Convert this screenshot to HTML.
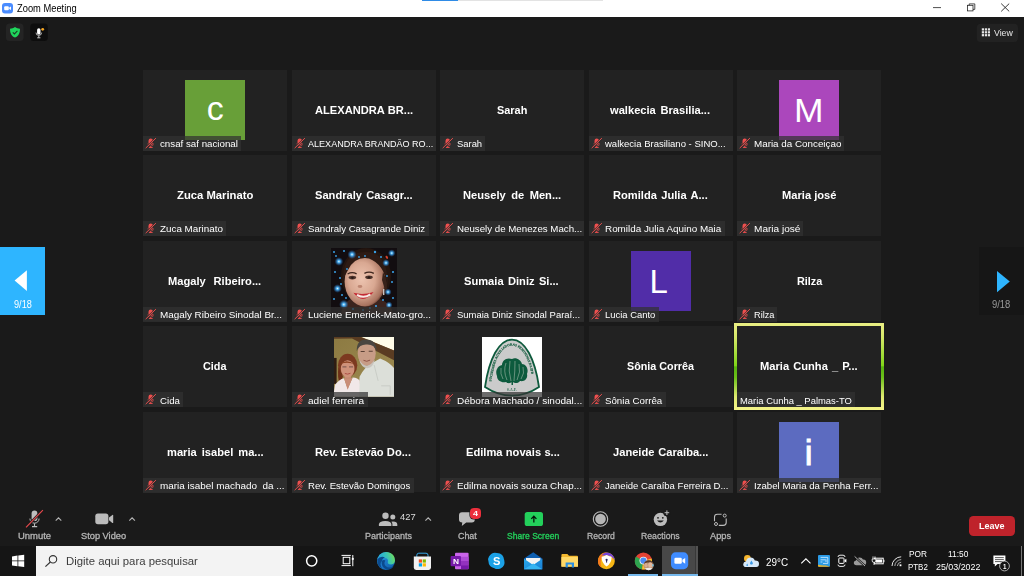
<!DOCTYPE html>
<html><head><meta charset="utf-8"><title>Zoom Meeting</title><style>
html,body{margin:0;padding:0;background:#1a1a1a;}
body{width:1024px;height:576px;position:relative;overflow:hidden;font-family:"Liberation Sans", sans-serif;}
.t{position:absolute;white-space:pre;line-height:normal;transform-origin:0 0;}
.tile{position:absolute;width:144px;height:80.6px;background:#222222;}
.av{position:absolute;width:60px;height:60px;}
.strip{position:absolute;height:14.8px;background:rgba(50,50,50,0.72);}
.mic{position:absolute;left:1.2px;top:0px;}
.abs{position:absolute;}
</style></head>
<body>
<!-- title bar -->
<div class="abs" style="left:0;top:0;width:1024px;height:17px;background:#ffffff"></div>
<div class="abs" style="left:422px;top:0;width:180.5px;height:1.2px;background:#e3e3e3"></div>
<div class="abs" style="left:422px;top:0;width:36px;height:1.2px;background:#2f8be6"></div>
<svg class="abs" style="left:0;top:0" width="1024" height="60" viewBox="0 0 1024 60">
  <!-- zoom logo -->
  <rect x="2" y="3" width="11" height="10.5" rx="3" fill="#4a8cff"/>
  <rect x="4.2" y="6.3" width="4.6" height="3.9" rx="1" fill="#fff"/>
  <path d="M9.2 7.6 L11 6.5 V10 L9.2 8.9 Z" fill="#fff"/>
  <!-- window controls -->
  <path d="M933 7.6 H941" stroke="#222" stroke-width="0.8"/>
  <rect x="967.4" y="5.3" width="5.6" height="5.6" fill="none" stroke="#222" stroke-width="0.8"/>
  <path d="M969.2 5.3 V3.9 H974.8 V9.4 H973" fill="none" stroke="#222" stroke-width="0.8"/>
  <path d="M1001.2 3.6 L1009.2 11.4 M1009.2 3.6 L1001.2 11.4" stroke="#222" stroke-width="0.9"/>
  <!-- shield -->
  <rect x="6" y="23.5" width="17.5" height="17.5" rx="3.5" fill="#242424"/>
  <path d="M15 27 C13.4 28.2 11.8 28.6 10 28.7 C10 33 11.3 35.9 15 37.6 C18.7 35.9 20 33 20 28.7 C18.2 28.6 16.6 28.2 15 27 Z" fill="#1fd65c"/>
  <path d="M12.8 32.3 L14.4 33.9 L17.4 30.8" fill="none" stroke="#1c3b25" stroke-width="1.1"/>
  <!-- mic box -->
  <rect x="30.2" y="23.5" width="17.6" height="17.5" rx="3.5" fill="#0d0d0d"/>
  <rect x="37.1" y="28.2" width="3.4" height="6.4" rx="1.7" fill="#fff"/>
  <path d="M36 32.6 a2.8 2.8 0 0 0 5.6 0" fill="none" stroke="#ddd" stroke-width="0.8"/>
  <path d="M38.8 35.6 V37.6 M37.2 37.8 H40.4" stroke="#ddd" stroke-width="0.9"/>
  <circle cx="42.7" cy="29.3" r="1.4" fill="#f5a623"/>
  <!-- view -->
  <rect x="976.8" y="23.8" width="41.2" height="18.2" rx="4" fill="#222222"/>
  <g fill="#e6e6e6">
    <rect x="981.8" y="28.3" width="2.2" height="2.2"/><rect x="984.8" y="28.3" width="2.2" height="2.2"/><rect x="987.8" y="28.3" width="2.2" height="2.2"/>
    <rect x="981.8" y="31.2" width="2.2" height="2.2"/><rect x="984.8" y="31.2" width="2.2" height="2.2"/><rect x="987.8" y="31.2" width="2.2" height="2.2"/>
    <rect x="981.8" y="34.1" width="2.2" height="2.2"/><rect x="984.8" y="34.1" width="2.2" height="2.2"/><rect x="987.8" y="34.1" width="2.2" height="2.2"/>
  </g>
</svg>
<!-- page arrows -->
<div class="abs" style="left:0;top:247px;width:45px;height:68px;background:#2eb5ff"></div>
<div class="abs" style="left:978.8px;top:247px;width:45.2px;height:68px;background:#161616"></div>
<svg class="abs" style="left:0;top:240px" width="1024" height="80" viewBox="0 240 1024 80">
  <path d="M26.9 270.3 V291 L14.6 280.6 Z" fill="#fff"/>
  <path d="M997 271 V292.3 L1009.8 281.6 Z" fill="#2eb5ff"/>
</svg>

<div class="tile" style="left:143px;top:70px"></div>
<div class="tile" style="left:291.7px;top:70px"></div>
<div class="tile" style="left:440px;top:70px"></div>
<div class="tile" style="left:588.6px;top:70px"></div>
<div class="tile" style="left:737px;top:70px"></div>
<div class="tile" style="left:143px;top:155.2px"></div>
<div class="tile" style="left:291.7px;top:155.2px"></div>
<div class="tile" style="left:440px;top:155.2px"></div>
<div class="tile" style="left:588.6px;top:155.2px"></div>
<div class="tile" style="left:737px;top:155.2px"></div>
<div class="tile" style="left:143px;top:240.8px"></div>
<div class="tile" style="left:291.7px;top:240.8px"></div>
<div class="tile" style="left:440px;top:240.8px"></div>
<div class="tile" style="left:588.6px;top:240.8px"></div>
<div class="tile" style="left:737px;top:240.8px"></div>
<div class="tile" style="left:143px;top:326.4px"></div>
<div class="tile" style="left:291.7px;top:326.4px"></div>
<div class="tile" style="left:440px;top:326.4px"></div>
<div class="tile" style="left:588.6px;top:326.4px"></div>
<div class="tile" style="left:737px;top:326.4px"></div>
<div class="tile" style="left:143px;top:411.9px"></div>
<div class="tile" style="left:291.7px;top:411.9px"></div>
<div class="tile" style="left:440px;top:411.9px"></div>
<div class="tile" style="left:588.6px;top:411.9px"></div>
<div class="tile" style="left:737px;top:411.9px"></div>
<div class="av" style="left:185.0px;top:80.2px;background:#689f38"></div>
<div class="av" style="left:779.0px;top:80.2px;background:#ab47bc"></div>
<div class="av" style="left:630.6px;top:251.0px;background:#512da8"></div>
<div class="av" style="left:779.0px;top:422.1px;background:#5c6bc0"></div><!-- photo 1 -->
<svg class="abs" style="left:331px;top:248px" width="66" height="66" viewBox="0 0 66 66">
  <defs><filter id="b1" x="-10%" y="-10%" width="120%" height="120%"><feGaussianBlur stdDeviation="0.8"/></filter>
  <filter id="b0" x="-50%" y="-50%" width="200%" height="200%"><feGaussianBlur stdDeviation="0.55"/></filter>
  <radialGradient id="skin" cx="0.42" cy="0.45" r="0.6"><stop offset="0" stop-color="#edc4b0"/><stop offset="0.55" stop-color="#d9a892"/><stop offset="0.9" stop-color="#a8735f"/><stop offset="1" stop-color="#6e4436"/></radialGradient>
  <radialGradient id="spk"><stop offset="0" stop-color="#e4f6ff"/><stop offset="0.3" stop-color="#49aef0"/><stop offset="1" stop-color="#1b5fb0" stop-opacity="0"/></radialGradient><clipPath id="c1"><rect width="66" height="66"/></clipPath></defs>
  <rect width="66" height="66" fill="#120d10"/>
  <g clip-path="url(#c1)"><g>
    <ellipse cx="35" cy="28" rx="25" ry="28" fill="#24150f"/>
    <path d="M10 66 Q12 52 24 50 L46 50 Q60 54 62 66Z" fill="#3c241e"/>
    <ellipse cx="34" cy="33.4" rx="20.4" ry="25" fill="url(#skin)"/>
    <path d="M12 32 Q12 3 36 4 Q57 5 57 38 Q53 16 38 10.5 Q24 8 17 22 Q13.6 28 12 32Z" fill="#2e1b14"/>
    <path d="M52 24 Q58 34 55 46 Q53 38 51 32Z" fill="#38221a"/>
    <ellipse cx="21.4" cy="29.6" rx="3.8" ry="1.8" fill="#4e342c"/><ellipse cx="21.4" cy="29.8" rx="1.3" ry="1.1" fill="#2a1a16"/>
    <ellipse cx="38" cy="29.2" rx="3.8" ry="1.8" fill="#4e342c"/><ellipse cx="38" cy="29.4" rx="1.3" ry="1.1" fill="#2a1a16"/>
    <path d="M16.6 26 Q21 23.4 25.6 25.8" stroke="#3e261e" stroke-width="1.3" fill="none"/>
    <path d="M33.4 25.4 Q38 22.8 42.8 25.4" stroke="#3e261e" stroke-width="1.3" fill="none"/>
    <path d="M22.4 44.8 Q32 57.4 42.6 44 Q32 47.4 22.4 44.8Z" fill="#c42a34"/>
    <path d="M26 46.8 Q32.6 51 39.4 46.4" stroke="#f6e9e4" stroke-width="2" fill="none"/>
    <ellipse cx="29" cy="38.5" rx="2.4" ry="1.4" fill="#bd8672"/>
    <rect x="52" y="41" width="1.4" height="6" fill="#c9c2c0"/>
  </g>
  <g fill="#3aa0e6">
    
    
    <circle cx="3" cy="4" r="1"/><circle cx="13" cy="3" r="1"/><circle cx="44" cy="4" r="1.2"/><circle cx="50" cy="9" r="1"/><circle cx="62" cy="24" r="1.1"/><circle cx="61" cy="34" r="1"/>
    <circle cx="4" cy="24" r="1"/><circle cx="9" cy="30" r="1"/><circle cx="3" cy="51" r="1"/><circle cx="22" cy="61" r="1.1"/><circle cx="45" cy="58" r="1.1"/><circle cx="52" cy="52" r="1"/>
    <circle cx="11" cy="47" r="1"/><circle cx="62" cy="50" r="1"/><circle cx="28" cy="9" r="0.9"/><circle cx="34" cy="8" r="0.9"/><circle cx="16" cy="21" r="0.9"/>
    <circle cx="10" cy="36" r="0.9"/><circle cx="15" cy="50" r="0.9"/><circle cx="39" cy="60" r="0.9"/><circle cx="32" cy="62" r="0.9"/><circle cx="56" cy="28" r="0.9"/><circle cx="5" cy="8" r="0.9"/>
  </g>
  <g fill="url(#spk)"><circle cx="7.9" cy="13.5" r="4.4"/><circle cx="21" cy="6.5" r="4.6"/><circle cx="6.5" cy="40.5" r="4.4"/><circle cx="12.8" cy="56.5" r="4.8"/><circle cx="60.7" cy="5.1" r="3.8"/><circle cx="55" cy="14.9" r="3.8"/><circle cx="57" cy="44" r="3.6"/><circle cx="58" cy="57" r="3.6"/></g>
  <ellipse cx="55.8" cy="9.3" rx="1.1" ry="1.7" fill="#d6402a" transform="rotate(-30 55.8 9.3)"/>
  </g>
</svg>
<!-- photo 2 -->
<svg class="abs" style="left:333.6px;top:337px" width="60.2" height="59.8" viewBox="0 0 60 60" preserveAspectRatio="none">
  <defs><filter id="b2" x="-10%" y="-10%" width="120%" height="120%"><feGaussianBlur stdDeviation="0.82"/></filter><clipPath id="c2"><rect width="60" height="60"/></clipPath>
  <linearGradient id="wall" x1="0" y1="0" x2="1" y2="1"><stop offset="0" stop-color="#8c7a42"/><stop offset="1" stop-color="#9f8c52"/></linearGradient></defs>
  <rect width="60" height="60" fill="url(#wall)"/>
  <g clip-path="url(#c2)"><g>
    <path d="M0 0 H60 V21 L20 0Z" fill="#7a5a2c"/>
    <path d="M25 -1 H61 V14 Z" fill="#fffce8"/>
    <path d="M-1 -0.5 L25 -0.5 L61 14 V24 L18 1.6 L-1 1.8Z" fill="#5a3c22"/>
    <rect x="-1" y="21" width="3.6" height="26" fill="#2e1c12"/>
    <!-- man shirt -->
    <path d="M24 61 L25.5 40 Q30 30 38 26 L46 21.5 Q57 26 61 33 V61Z" fill="#dcdfd9"/>
    <path d="M40 28 L44 44 M47 49 H56 V58" stroke="#c4c8c2" stroke-width="0.8" fill="none"/>
    <!-- man head -->
    <ellipse cx="32.6" cy="16.5" rx="9" ry="12.4" fill="#c79c86"/>
    <path d="M22.6 14 Q22.6 2.2 32 2.4 Q42.6 2.4 42.6 15 Q40.6 7.2 32.6 7.6 Q25.6 7.2 22.6 14Z" fill="#4a4641"/>
    <path d="M25 22.6 Q32.6 35 40.6 22.6 Q39.4 30.6 33 31.4 Q27 30.6 25 22.6Z" fill="#c9c4be"/>
    <path d="M26.6 14.6 H30.6 M34.6 14.2 H38.6" stroke="#5a4034" stroke-width="1"/>
    <path d="M29.4 23.4 Q32.6 25.4 36 23.2" stroke="#8a4c40" stroke-width="0.9" fill="none"/>
    <!-- woman -->
    <ellipse cx="13.6" cy="28.4" rx="9.6" ry="11.6" fill="#7c3a20"/>
    <path d="M4.4 30 Q3 42 6 46 L9 40Z" fill="#6e3018"/>
    <rect x="10.6" y="36" width="6.4" height="8" fill="#c58a72"/><ellipse cx="13.6" cy="32" rx="6.8" ry="8.6" fill="#cf927a"/>
    <path d="M6.6 27 Q12 21.4 20.6 27.4 Q14 24.6 6.6 27Z" fill="#8c4220"/>
    <path d="M8.4 30 H12.4 M15 30 H19" stroke="#6a4a44" stroke-width="0.9"/>
    <path d="M10.8 36.6 Q13.6 38 16.4 36.4" stroke="#a84840" stroke-width="0.9" fill="none"/>
    <path d="M-1 61 L1 48 Q5 42.6 10 41.4 L13.6 52 L18.6 40.6 Q24 41 25.6 44 L25 61Z" fill="#f1e8e8"/>
    <path d="M10 41.4 L13.6 53 L18.6 40.6 Q14 43.6 10 41.4Z" fill="#c98e78"/>
  </g></g>
</svg>
<!-- photo 3 logo -->
<svg class="abs" style="left:482px;top:337px" width="60" height="60" viewBox="0 0 60 60">
  <defs><path id="arc" d="M9.2 45.5 C12 22 20 8.6 30 8.6 C40 8.6 48 22 50.8 45.5"/><filter id="b3"><feGaussianBlur stdDeviation="0.35"/></filter></defs>
  <rect width="60" height="60" fill="#ffffff"/>
  <g filter="url(#b3)">
  <path d="M30 2.6 C17 2.6 7 22 3 50 C12 56 22 58.6 30 58.6 C38 58.6 48 56 57 50 C53 22 43 2.6 30 2.6Z" fill="#cbcbcb" stroke="#0f5a3c" stroke-width="1.8"/>
  <text font-family="Liberation Serif, serif" font-size="3.3" font-weight="700" fill="#0f5a3c" stroke="#0f5a3c" stroke-width="0.15" letter-spacing="0.05"><textPath href="#arc" startOffset="1">SOCIEDADES AUXILIADORAS FEMININAS DA IPB</textPath></text>
  <path d="M30 22 C24 20 20 24 20 28 C15 29 13 35 15 39 C15 44 20 46 24 45 C26 47 29 46 29.5 45 L29.5 48 H31 L31 45 C33 47 37 46 38 44 C43 45 46 41 45 37 C47 32 44 27 40 27 C39 23 34 20 30 22Z" fill="#0f5a3c"/>
  <g stroke="#b9c9bf" stroke-width="0.5" fill="none"><path d="M24 26 Q21 34 25 43"/><path d="M28 24 Q26 34 29 44"/><path d="M33 24 Q33 34 32 44"/><path d="M37 27 Q39 35 35 43"/><path d="M41 30 Q43 36 39 42"/><path d="M19 31 Q18 37 21 42"/></g>
  <text x="30" y="54.3" text-anchor="middle" font-family="Liberation Serif, serif" font-size="3.2" font-weight="700" fill="#0f5a3c" letter-spacing="0.3">S.A.F.</text>
  </g>
</svg>
<!-- avatar letters -->
<svg class="abs" style="left:0;top:0" width="1024" height="500" viewBox="0 0 1024 500" font-family="Liberation Sans, sans-serif" fill="#fff" text-anchor="middle">
  <text x="215.2" y="119.6" font-size="34">c</text>
  <text transform="translate(808.7 122.2) scale(1.09 1)" x="0" y="0" font-size="32.5">M</text>
  <text x="658.6" y="292.8" font-size="33">L</text>
  <text x="808.7" y="465" font-size="35" stroke="#fff" stroke-width="0.9">i</text>
</svg>
<div class="strip" style="left:143px;top:136px;width:97.80000000000001px"><svg class="mic" width="13" height="15" viewBox="0 0 13 15"><g fill="#ee4f4e"><rect x="4.5" y="2.6" width="4.4" height="6.4" rx="2.2"/><path d="M3.9 7.4 a2.8 2.8 0 0 0 5.6 0" fill="none" stroke="#ee4f4e" stroke-width="0.6"/><rect x="6.3" y="10" width="0.8" height="1.4"/><rect x="4.9" y="11.1" width="3.7" height="0.9"/></g><path d="M1.7 12.1 L11.9 2.1" stroke="#2e2e2e" stroke-width="1.9"/><path d="M1.7 12.1 L11.9 2.1" stroke="#ee4f4e" stroke-width="0.95"/></svg></div>
<div class="strip" style="left:291.7px;top:136px;width:144.0px"><svg class="mic" width="13" height="15" viewBox="0 0 13 15"><g fill="#ee4f4e"><rect x="4.5" y="2.6" width="4.4" height="6.4" rx="2.2"/><path d="M3.9 7.4 a2.8 2.8 0 0 0 5.6 0" fill="none" stroke="#ee4f4e" stroke-width="0.6"/><rect x="6.3" y="10" width="0.8" height="1.4"/><rect x="4.9" y="11.1" width="3.7" height="0.9"/></g><path d="M1.7 12.1 L11.9 2.1" stroke="#2e2e2e" stroke-width="1.9"/><path d="M1.7 12.1 L11.9 2.1" stroke="#ee4f4e" stroke-width="0.95"/></svg></div>
<div class="strip" style="left:440px;top:136px;width:45.0px"><svg class="mic" width="13" height="15" viewBox="0 0 13 15"><g fill="#ee4f4e"><rect x="4.5" y="2.6" width="4.4" height="6.4" rx="2.2"/><path d="M3.9 7.4 a2.8 2.8 0 0 0 5.6 0" fill="none" stroke="#ee4f4e" stroke-width="0.6"/><rect x="6.3" y="10" width="0.8" height="1.4"/><rect x="4.9" y="11.1" width="3.7" height="0.9"/></g><path d="M1.7 12.1 L11.9 2.1" stroke="#2e2e2e" stroke-width="1.9"/><path d="M1.7 12.1 L11.9 2.1" stroke="#ee4f4e" stroke-width="0.95"/></svg></div>
<div class="strip" style="left:588.6px;top:136px;width:144.0px"><svg class="mic" width="13" height="15" viewBox="0 0 13 15"><g fill="#ee4f4e"><rect x="4.5" y="2.6" width="4.4" height="6.4" rx="2.2"/><path d="M3.9 7.4 a2.8 2.8 0 0 0 5.6 0" fill="none" stroke="#ee4f4e" stroke-width="0.6"/><rect x="6.3" y="10" width="0.8" height="1.4"/><rect x="4.9" y="11.1" width="3.7" height="0.9"/></g><path d="M1.7 12.1 L11.9 2.1" stroke="#2e2e2e" stroke-width="1.9"/><path d="M1.7 12.1 L11.9 2.1" stroke="#ee4f4e" stroke-width="0.95"/></svg></div>
<div class="strip" style="left:737px;top:136px;width:107.29999999999995px"><svg class="mic" width="13" height="15" viewBox="0 0 13 15"><g fill="#ee4f4e"><rect x="4.5" y="2.6" width="4.4" height="6.4" rx="2.2"/><path d="M3.9 7.4 a2.8 2.8 0 0 0 5.6 0" fill="none" stroke="#ee4f4e" stroke-width="0.6"/><rect x="6.3" y="10" width="0.8" height="1.4"/><rect x="4.9" y="11.1" width="3.7" height="0.9"/></g><path d="M1.7 12.1 L11.9 2.1" stroke="#2e2e2e" stroke-width="1.9"/><path d="M1.7 12.1 L11.9 2.1" stroke="#ee4f4e" stroke-width="0.95"/></svg></div>
<div class="strip" style="left:143px;top:221.2px;width:82.80000000000001px"><svg class="mic" width="13" height="15" viewBox="0 0 13 15"><g fill="#ee4f4e"><rect x="4.5" y="2.6" width="4.4" height="6.4" rx="2.2"/><path d="M3.9 7.4 a2.8 2.8 0 0 0 5.6 0" fill="none" stroke="#ee4f4e" stroke-width="0.6"/><rect x="6.3" y="10" width="0.8" height="1.4"/><rect x="4.9" y="11.1" width="3.7" height="0.9"/></g><path d="M1.7 12.1 L11.9 2.1" stroke="#2e2e2e" stroke-width="1.9"/><path d="M1.7 12.1 L11.9 2.1" stroke="#ee4f4e" stroke-width="0.95"/></svg></div>
<div class="strip" style="left:291.7px;top:221.2px;width:137.10000000000002px"><svg class="mic" width="13" height="15" viewBox="0 0 13 15"><g fill="#ee4f4e"><rect x="4.5" y="2.6" width="4.4" height="6.4" rx="2.2"/><path d="M3.9 7.4 a2.8 2.8 0 0 0 5.6 0" fill="none" stroke="#ee4f4e" stroke-width="0.6"/><rect x="6.3" y="10" width="0.8" height="1.4"/><rect x="4.9" y="11.1" width="3.7" height="0.9"/></g><path d="M1.7 12.1 L11.9 2.1" stroke="#2e2e2e" stroke-width="1.9"/><path d="M1.7 12.1 L11.9 2.1" stroke="#ee4f4e" stroke-width="0.95"/></svg></div>
<div class="strip" style="left:440px;top:221.2px;width:144px"><svg class="mic" width="13" height="15" viewBox="0 0 13 15"><g fill="#ee4f4e"><rect x="4.5" y="2.6" width="4.4" height="6.4" rx="2.2"/><path d="M3.9 7.4 a2.8 2.8 0 0 0 5.6 0" fill="none" stroke="#ee4f4e" stroke-width="0.6"/><rect x="6.3" y="10" width="0.8" height="1.4"/><rect x="4.9" y="11.1" width="3.7" height="0.9"/></g><path d="M1.7 12.1 L11.9 2.1" stroke="#2e2e2e" stroke-width="1.9"/><path d="M1.7 12.1 L11.9 2.1" stroke="#ee4f4e" stroke-width="0.95"/></svg></div>
<div class="strip" style="left:588.6px;top:221.2px;width:136.19999999999993px"><svg class="mic" width="13" height="15" viewBox="0 0 13 15"><g fill="#ee4f4e"><rect x="4.5" y="2.6" width="4.4" height="6.4" rx="2.2"/><path d="M3.9 7.4 a2.8 2.8 0 0 0 5.6 0" fill="none" stroke="#ee4f4e" stroke-width="0.6"/><rect x="6.3" y="10" width="0.8" height="1.4"/><rect x="4.9" y="11.1" width="3.7" height="0.9"/></g><path d="M1.7 12.1 L11.9 2.1" stroke="#2e2e2e" stroke-width="1.9"/><path d="M1.7 12.1 L11.9 2.1" stroke="#ee4f4e" stroke-width="0.95"/></svg></div>
<div class="strip" style="left:737px;top:221.2px;width:66.29999999999995px"><svg class="mic" width="13" height="15" viewBox="0 0 13 15"><g fill="#ee4f4e"><rect x="4.5" y="2.6" width="4.4" height="6.4" rx="2.2"/><path d="M3.9 7.4 a2.8 2.8 0 0 0 5.6 0" fill="none" stroke="#ee4f4e" stroke-width="0.6"/><rect x="6.3" y="10" width="0.8" height="1.4"/><rect x="4.9" y="11.1" width="3.7" height="0.9"/></g><path d="M1.7 12.1 L11.9 2.1" stroke="#2e2e2e" stroke-width="1.9"/><path d="M1.7 12.1 L11.9 2.1" stroke="#ee4f4e" stroke-width="0.95"/></svg></div>
<div class="strip" style="left:143px;top:306.8px;width:144px"><svg class="mic" width="13" height="15" viewBox="0 0 13 15"><g fill="#ee4f4e"><rect x="4.5" y="2.6" width="4.4" height="6.4" rx="2.2"/><path d="M3.9 7.4 a2.8 2.8 0 0 0 5.6 0" fill="none" stroke="#ee4f4e" stroke-width="0.6"/><rect x="6.3" y="10" width="0.8" height="1.4"/><rect x="4.9" y="11.1" width="3.7" height="0.9"/></g><path d="M1.7 12.1 L11.9 2.1" stroke="#2e2e2e" stroke-width="1.9"/><path d="M1.7 12.1 L11.9 2.1" stroke="#ee4f4e" stroke-width="0.95"/></svg></div>
<div class="strip" style="left:291.7px;top:306.8px;width:144.0px"><svg class="mic" width="13" height="15" viewBox="0 0 13 15"><g fill="#ee4f4e"><rect x="4.5" y="2.6" width="4.4" height="6.4" rx="2.2"/><path d="M3.9 7.4 a2.8 2.8 0 0 0 5.6 0" fill="none" stroke="#ee4f4e" stroke-width="0.6"/><rect x="6.3" y="10" width="0.8" height="1.4"/><rect x="4.9" y="11.1" width="3.7" height="0.9"/></g><path d="M1.7 12.1 L11.9 2.1" stroke="#2e2e2e" stroke-width="1.9"/><path d="M1.7 12.1 L11.9 2.1" stroke="#ee4f4e" stroke-width="0.95"/></svg></div>
<div class="strip" style="left:440px;top:306.8px;width:144px"><svg class="mic" width="13" height="15" viewBox="0 0 13 15"><g fill="#ee4f4e"><rect x="4.5" y="2.6" width="4.4" height="6.4" rx="2.2"/><path d="M3.9 7.4 a2.8 2.8 0 0 0 5.6 0" fill="none" stroke="#ee4f4e" stroke-width="0.6"/><rect x="6.3" y="10" width="0.8" height="1.4"/><rect x="4.9" y="11.1" width="3.7" height="0.9"/></g><path d="M1.7 12.1 L11.9 2.1" stroke="#2e2e2e" stroke-width="1.9"/><path d="M1.7 12.1 L11.9 2.1" stroke="#ee4f4e" stroke-width="0.95"/></svg></div>
<div class="strip" style="left:588.6px;top:306.8px;width:70.19999999999993px"><svg class="mic" width="13" height="15" viewBox="0 0 13 15"><g fill="#ee4f4e"><rect x="4.5" y="2.6" width="4.4" height="6.4" rx="2.2"/><path d="M3.9 7.4 a2.8 2.8 0 0 0 5.6 0" fill="none" stroke="#ee4f4e" stroke-width="0.6"/><rect x="6.3" y="10" width="0.8" height="1.4"/><rect x="4.9" y="11.1" width="3.7" height="0.9"/></g><path d="M1.7 12.1 L11.9 2.1" stroke="#2e2e2e" stroke-width="1.9"/><path d="M1.7 12.1 L11.9 2.1" stroke="#ee4f4e" stroke-width="0.95"/></svg></div>
<div class="strip" style="left:737px;top:306.8px;width:40.299999999999955px"><svg class="mic" width="13" height="15" viewBox="0 0 13 15"><g fill="#ee4f4e"><rect x="4.5" y="2.6" width="4.4" height="6.4" rx="2.2"/><path d="M3.9 7.4 a2.8 2.8 0 0 0 5.6 0" fill="none" stroke="#ee4f4e" stroke-width="0.6"/><rect x="6.3" y="10" width="0.8" height="1.4"/><rect x="4.9" y="11.1" width="3.7" height="0.9"/></g><path d="M1.7 12.1 L11.9 2.1" stroke="#2e2e2e" stroke-width="1.9"/><path d="M1.7 12.1 L11.9 2.1" stroke="#ee4f4e" stroke-width="0.95"/></svg></div>
<div class="strip" style="left:143px;top:392.4px;width:39.80000000000001px"><svg class="mic" width="13" height="15" viewBox="0 0 13 15"><g fill="#ee4f4e"><rect x="4.5" y="2.6" width="4.4" height="6.4" rx="2.2"/><path d="M3.9 7.4 a2.8 2.8 0 0 0 5.6 0" fill="none" stroke="#ee4f4e" stroke-width="0.6"/><rect x="6.3" y="10" width="0.8" height="1.4"/><rect x="4.9" y="11.1" width="3.7" height="0.9"/></g><path d="M1.7 12.1 L11.9 2.1" stroke="#2e2e2e" stroke-width="1.9"/><path d="M1.7 12.1 L11.9 2.1" stroke="#ee4f4e" stroke-width="0.95"/></svg></div>
<div class="strip" style="left:291.7px;top:392.4px;width:75.90000000000003px"><svg class="mic" width="13" height="15" viewBox="0 0 13 15"><g fill="#ee4f4e"><rect x="4.5" y="2.6" width="4.4" height="6.4" rx="2.2"/><path d="M3.9 7.4 a2.8 2.8 0 0 0 5.6 0" fill="none" stroke="#ee4f4e" stroke-width="0.6"/><rect x="6.3" y="10" width="0.8" height="1.4"/><rect x="4.9" y="11.1" width="3.7" height="0.9"/></g><path d="M1.7 12.1 L11.9 2.1" stroke="#2e2e2e" stroke-width="1.9"/><path d="M1.7 12.1 L11.9 2.1" stroke="#ee4f4e" stroke-width="0.95"/></svg></div>
<div class="strip" style="left:440px;top:392.4px;width:144px"><svg class="mic" width="13" height="15" viewBox="0 0 13 15"><g fill="#ee4f4e"><rect x="4.5" y="2.6" width="4.4" height="6.4" rx="2.2"/><path d="M3.9 7.4 a2.8 2.8 0 0 0 5.6 0" fill="none" stroke="#ee4f4e" stroke-width="0.6"/><rect x="6.3" y="10" width="0.8" height="1.4"/><rect x="4.9" y="11.1" width="3.7" height="0.9"/></g><path d="M1.7 12.1 L11.9 2.1" stroke="#2e2e2e" stroke-width="1.9"/><path d="M1.7 12.1 L11.9 2.1" stroke="#ee4f4e" stroke-width="0.95"/></svg></div>
<div class="strip" style="left:588.6px;top:392.4px;width:77.09999999999991px"><svg class="mic" width="13" height="15" viewBox="0 0 13 15"><g fill="#ee4f4e"><rect x="4.5" y="2.6" width="4.4" height="6.4" rx="2.2"/><path d="M3.9 7.4 a2.8 2.8 0 0 0 5.6 0" fill="none" stroke="#ee4f4e" stroke-width="0.6"/><rect x="6.3" y="10" width="0.8" height="1.4"/><rect x="4.9" y="11.1" width="3.7" height="0.9"/></g><path d="M1.7 12.1 L11.9 2.1" stroke="#2e2e2e" stroke-width="1.9"/><path d="M1.7 12.1 L11.9 2.1" stroke="#ee4f4e" stroke-width="0.95"/></svg></div>
<div class="strip" style="left:737px;top:392.4px;width:117.5px"></div>
<div class="strip" style="left:143px;top:477.9px;width:144px"><svg class="mic" width="13" height="15" viewBox="0 0 13 15"><g fill="#ee4f4e"><rect x="4.5" y="2.6" width="4.4" height="6.4" rx="2.2"/><path d="M3.9 7.4 a2.8 2.8 0 0 0 5.6 0" fill="none" stroke="#ee4f4e" stroke-width="0.6"/><rect x="6.3" y="10" width="0.8" height="1.4"/><rect x="4.9" y="11.1" width="3.7" height="0.9"/></g><path d="M1.7 12.1 L11.9 2.1" stroke="#2e2e2e" stroke-width="1.9"/><path d="M1.7 12.1 L11.9 2.1" stroke="#ee4f4e" stroke-width="0.95"/></svg></div>
<div class="strip" style="left:291.7px;top:477.9px;width:122.10000000000002px"><svg class="mic" width="13" height="15" viewBox="0 0 13 15"><g fill="#ee4f4e"><rect x="4.5" y="2.6" width="4.4" height="6.4" rx="2.2"/><path d="M3.9 7.4 a2.8 2.8 0 0 0 5.6 0" fill="none" stroke="#ee4f4e" stroke-width="0.6"/><rect x="6.3" y="10" width="0.8" height="1.4"/><rect x="4.9" y="11.1" width="3.7" height="0.9"/></g><path d="M1.7 12.1 L11.9 2.1" stroke="#2e2e2e" stroke-width="1.9"/><path d="M1.7 12.1 L11.9 2.1" stroke="#ee4f4e" stroke-width="0.95"/></svg></div>
<div class="strip" style="left:440px;top:477.9px;width:144px"><svg class="mic" width="13" height="15" viewBox="0 0 13 15"><g fill="#ee4f4e"><rect x="4.5" y="2.6" width="4.4" height="6.4" rx="2.2"/><path d="M3.9 7.4 a2.8 2.8 0 0 0 5.6 0" fill="none" stroke="#ee4f4e" stroke-width="0.6"/><rect x="6.3" y="10" width="0.8" height="1.4"/><rect x="4.9" y="11.1" width="3.7" height="0.9"/></g><path d="M1.7 12.1 L11.9 2.1" stroke="#2e2e2e" stroke-width="1.9"/><path d="M1.7 12.1 L11.9 2.1" stroke="#ee4f4e" stroke-width="0.95"/></svg></div>
<div class="strip" style="left:588.6px;top:477.9px;width:144.0px"><svg class="mic" width="13" height="15" viewBox="0 0 13 15"><g fill="#ee4f4e"><rect x="4.5" y="2.6" width="4.4" height="6.4" rx="2.2"/><path d="M3.9 7.4 a2.8 2.8 0 0 0 5.6 0" fill="none" stroke="#ee4f4e" stroke-width="0.6"/><rect x="6.3" y="10" width="0.8" height="1.4"/><rect x="4.9" y="11.1" width="3.7" height="0.9"/></g><path d="M1.7 12.1 L11.9 2.1" stroke="#2e2e2e" stroke-width="1.9"/><path d="M1.7 12.1 L11.9 2.1" stroke="#ee4f4e" stroke-width="0.95"/></svg></div>
<div class="strip" style="left:737px;top:477.9px;width:144px"><svg class="mic" width="13" height="15" viewBox="0 0 13 15"><g fill="#ee4f4e"><rect x="4.5" y="2.6" width="4.4" height="6.4" rx="2.2"/><path d="M3.9 7.4 a2.8 2.8 0 0 0 5.6 0" fill="none" stroke="#ee4f4e" stroke-width="0.6"/><rect x="6.3" y="10" width="0.8" height="1.4"/><rect x="4.9" y="11.1" width="3.7" height="0.9"/></g><path d="M1.7 12.1 L11.9 2.1" stroke="#2e2e2e" stroke-width="1.9"/><path d="M1.7 12.1 L11.9 2.1" stroke="#ee4f4e" stroke-width="0.95"/></svg></div>
<!-- active speaker border -->
<div class="abs" style="left:734.2px;top:323.3px;width:149.7px;height:87px;box-sizing:border-box;border:3.2px solid;border-image:linear-gradient(to bottom,#e8ee82 0%,#d3e766 16%,#80d418 49%,#58b30f 50.5%,#6bc019 63%,#dde96e 86%,#f3f387 100%) 1;"></div>
<!-- toolbar + taskbar -->
<div class="abs" style="left:0;top:546px;width:1024px;height:30px;background:#151515"></div>
<div class="abs" style="left:36px;top:546px;width:257.3px;height:30px;background:#f3f3f3"></div>
<div class="abs" style="left:661.8px;top:546px;width:33.4px;height:30px;background:#484848"></div>
<div class="abs" style="left:694.9px;top:546px;width:0.7px;height:30px;background:#383838"></div><div class="abs" style="left:695.6px;top:546px;width:2.3px;height:30px;background:#525252"></div>
<div class="abs" style="left:628px;top:573.7px;width:30px;height:2.3px;background:#76b9ed"></div>
<div class="abs" style="left:661.8px;top:573.7px;width:36.1px;height:2.3px;background:#76b9ed"></div>
<div class="abs" style="left:1020.6px;top:546px;width:0.9px;height:30px;background:#777"></div>
<div class="abs" style="left:969.1px;top:516.1px;width:45.9px;height:20.2px;border-radius:4.5px;background:#bf232b"></div>
<svg class="abs" style="left:0;top:496px" width="1024" height="80" viewBox="0 496 1024 80">
  <defs>
    <linearGradient id="edgeg" x1="0" y1="0" x2="1" y2="1"><stop offset="0" stop-color="#35c1f1"/><stop offset="0.5" stop-color="#1b78c9"/><stop offset="1" stop-color="#0c59a4"/></linearGradient>
    <linearGradient id="edgeg2" x1="0" y1="0.6" x2="1" y2="0.3"><stop offset="0" stop-color="#22a6e0"/><stop offset="0.55" stop-color="#3ac4b4"/><stop offset="1" stop-color="#74de52"/></linearGradient>
    <linearGradient id="mailg" x1="0" y1="0" x2="1" y2="1"><stop offset="0" stop-color="#28a8ea"/><stop offset="1" stop-color="#1a7fd4"/></linearGradient>
  </defs>
  <!-- ===== zoom toolbar ===== -->
  <g fill="#bcbcbc" stroke="none">
    <!-- mic muted -->
    <rect x="31.6" y="510.5" width="5.8" height="10.6" rx="2.9" fill="#bdbdbd"/>
    <path d="M29.9 518.6 a4.6 4.6 0 0 0 9.2 0" fill="none" stroke="#bdbdbd" stroke-width="1"/>
    <path d="M34.5 523.4 V526.4 M32 526.6 H37.2" stroke="#bdbdbd" stroke-width="1.1" fill="none"/>
    <path d="M26 527.4 L42.9 510.1" stroke="#1a1a1a" stroke-width="2.6"/>
    <path d="M26 527.4 L42.9 510.1" stroke="#e5484d" stroke-width="1.2"/>
    <!-- carets -->
    <path d="M55.7 520.6 L58.5 517.8 L61.3 520.6" fill="none" stroke="#b4b4b4" stroke-width="1.1"/>
    <path d="M129.3 520.6 L132.1 517.8 L134.9 520.6" fill="none" stroke="#b4b4b4" stroke-width="1.1"/>
    <path d="M425.4 520.6 L428.2 517.8 L431 520.6" fill="none" stroke="#b4b4b4" stroke-width="1.1"/>
    <!-- camera -->
    <rect x="95.3" y="513.6" width="13.1" height="10.6" rx="2.6"/>
    <path d="M109 517.6 L112.4 514.9 Q113.2 514.4 113.2 515.4 V522.4 Q113.2 523.4 112.4 522.9 L109 520.3Z"/>
    <!-- participants -->
    <circle cx="385.5" cy="515.8" r="3.2"/>
    <path d="M378.9 526 V524.4 Q378.9 520.9 385.4 520.9 Q391.4 520.9 391.4 524.4 V526Z"/>
    <circle cx="392.8" cy="516.9" r="2.5"/>
    <path d="M392.4 526 V524 Q392.3 522.5 391.3 521.8 Q392 521.6 393 521.6 Q397.3 521.6 397.3 524.6 V526Z"/>
    <!-- chat -->
    <path d="M462 512.2 H471.8 Q474.8 512.2 474.8 515.2 V519.5 Q474.8 522.5 471.8 522.5 H466.2 L461.8 526 L462.3 522.5 Q459 522.4 459 519.5 V515.2 Q459 512.2 462 512.2Z"/>
    <rect x="469.4" y="507.5" width="12.2" height="12" rx="4.4" fill="#1a1a1a"/>
    <rect x="470" y="508.1" width="11" height="10.8" rx="3.8" fill="#ec2f3c"/>
    <!-- share -->
    <rect x="524.7" y="512" width="18.3" height="14" rx="2.6" fill="#23d05b"/>
    <path d="M533.85 522.4 V516.6 M531.3 518.9 L533.85 516.3 L536.4 518.9" fill="none" stroke="#06140b" stroke-width="1.3"/>
    <!-- record -->
    <circle cx="600.5" cy="519" r="7.2" fill="none" stroke="#bcbcbc" stroke-width="1.1"/>
    <circle cx="600.5" cy="519" r="5.3" fill="#b5b5b5"/>
    <!-- reactions -->
    <circle cx="660.4" cy="519.4" r="6.7"/>
    <circle cx="666.9" cy="512.7" r="3.6" fill="#1a1a1a"/>
    <path d="M666.9 510.4 V515 M664.6 512.7 H669.2" stroke="#bcbcbc" stroke-width="1" fill="none"/>
    <circle cx="658" cy="517.8" r="0.9" fill="#1a1a1a"/><circle cx="662.8" cy="517.8" r="0.9" fill="#1a1a1a"/>
    <path d="M657 520.6 Q660.4 524.4 663.8 520.6Z" fill="#1a1a1a"/>
    <!-- apps -->
    <path d="M721.6 514.2 H717.4 Q714.5 514.2 714.5 517.1 V521.2 M718.8 525.4 H723.3 Q726.2 525.4 726.2 522.5 V518.4" fill="none" stroke="#bcbcbc" stroke-width="1.1"/>
    <circle cx="724.7" cy="515.6" r="1.5" fill="none" stroke="#bcbcbc" stroke-width="1"/>
    <circle cx="716" cy="524" r="1.5" fill="none" stroke="#bcbcbc" stroke-width="1"/>
  </g>
  <!-- ===== windows taskbar ===== -->
  <g fill="#fff">
    <path d="M12 556.4 L17.5 555.6 V560.5 H12Z M18.3 555.5 L24.2 554.7 V560.5 H18.3Z M12 561.3 H17.5 V566.2 L12 565.4Z M18.3 561.3 H24.2 V567.1 L18.3 566.3Z"/>
  </g>
  <circle cx="53" cy="559.3" r="3.7" fill="none" stroke="#333" stroke-width="1.1"/>
  <path d="M50.4 562 L45.4 566.6" stroke="#333" stroke-width="1.2"/>
  <circle cx="311.7" cy="560.8" r="5.1" fill="none" stroke="#fff" stroke-width="1.5"/>
  <!-- task view -->
  <g fill="none" stroke="#fff" stroke-width="1">
    <rect x="343.2" y="557.3" width="6.6" height="6.4"/>
    <path d="M341.5 555.4 H350.8 M341.5 565.6 H350.8 M352.8 555 V566.2"/>
  </g>
  <circle cx="352.8" cy="558.9" r="1.1" fill="#fff"/>
  <!-- edge -->
  <circle cx="386" cy="561" r="9" fill="url(#edgeg)"/>
  <path d="M379.4 555 Q383.4 551.6 388 552.2 Q394.8 553.4 395 560.4 Q394.6 564.4 390.8 564.6 Q387.4 564.4 387.8 561.8 Q388.6 559.2 386 558.2 Q382.6 557.2 379.6 559.4 Q378 557.4 379.4 555Z" fill="url(#edgeg2)"/>
  <path d="M377.2 559.4 Q380 555.6 385 557.2 Q381.4 559 381.6 563 Q382 567.6 386.4 569.4 Q391 570.4 393.8 566 Q389 569 385.6 566 Q383.4 563.2 385.4 560.4 Q384.6 559.8 383.6 560 Q380.6 560.8 380.6 564.4 Q380.8 567 382.4 568.8 Q377 566.4 377.2 559.4Z" fill="#0b4a8e"/>
  <!-- store -->
  <path d="M416.8 557 V555.2 Q416.8 553.2 418.8 553.2 H426 Q428 553.2 428 555.2 V557" fill="none" stroke="#35a7e8" stroke-width="1"/>
  <path d="M413.8 556.6 H431 V567.6 Q431 569.9 428.7 569.9 H416.1 Q413.8 569.9 413.8 567.6Z" fill="#f1f1f1"/>
  <rect x="418.8" y="559.4" width="3.2" height="3.2" fill="#f25022"/><rect x="422.7" y="559.4" width="3.2" height="3.2" fill="#7fba00"/>
  <rect x="418.8" y="563.3" width="3.2" height="3.2" fill="#00a4ef"/><rect x="422.7" y="563.3" width="3.2" height="3.2" fill="#ffb900"/>
  <!-- onenote -->
  <rect x="455" y="552.8" width="13.6" height="16.4" rx="1" fill="#ca64ea"/>
  <rect x="461" y="556.8" width="7.6" height="4.2" fill="#ae4bd5"/><rect x="461" y="561" width="7.6" height="4.2" fill="#9332bf"/><rect x="461" y="565.2" width="7.6" height="4" fill="#7719aa"/>
  <rect x="450.6" y="556" width="10.4" height="10.2" rx="1" fill="#7719aa"/>
  <!-- skype -->
  <path d="M489 556.5 Q491.8 551.6 497 553 Q503.6 553.4 504.3 560.4 Q505.6 566 500.6 568.4 Q497 569.8 494.4 568.2 Q488.6 567 488.4 561 Q487.6 558.6 489 556.5Z" fill="#1ba1e6"/>
  <!-- mail -->
  <path d="M524 558.6 L533.2 552.3 L542.3 558.6 V569.2 H524Z" fill="#0f5fb0"/>
  <path d="M526 558 H540.4 V565 H526Z" fill="#f4f4f4"/>
  <path d="M524 558.8 L533.2 565 L542.3 558.8 V569.2 H524Z" fill="url(#mailg)"/>
  <path d="M524 569.2 L533.2 563.4 L542.3 569.2Z" fill="#35b4f2"/>
  <!-- folder -->
  <path d="M561.4 555 Q561.4 554 562.4 554 H567.4 L569 555.8 H577 Q578 555.8 578 556.8 V566.6 H561.4Z" fill="#f4b92f"/>
  <rect x="561.4" y="557" width="16.6" height="9.8" rx="0.6" fill="#ffd968"/>
  <path d="M565.6 567.6 V562.6 H574 V567.6 H571.8 V564.6 H567.8 V567.6Z" fill="#2d8fe0"/>
  <!-- avast -->
  <circle cx="606.4" cy="560.9" r="8.4" fill="#f7b715"/>
  <path d="M606.4 552.5 A8.4 8.4 0 0 0 601.6 567.8 Q599.4 562 602.4 557 Q604 554 606.4 552.5Z" fill="#f47a1c"/>
  <path d="M601.6 555.2 Q604.6 551.6 609.4 553 Q614.4 555 614.8 560.6 Q612.4 556 607.6 555.6 Q604 555.4 601.6 555.2Z" fill="#7744d8"/>
  <path d="M606.6 555 Q609.4 556.8 611.6 556.8 Q611.8 563.2 606.6 566.4 Q601.4 563.2 601.6 556.8 Q603.8 556.8 606.6 555Z" fill="#fff"/>
  <circle cx="606.6" cy="559.8" r="1.1" fill="#2a2358"/><rect x="606.1" y="560" width="1" height="2.6" fill="#2a2358"/>
  <!-- chrome -->
  <circle cx="643.4" cy="561" r="8.6" fill="#e34234"/>
  <path d="M643.4 561 L636 556.6 A8.6 8.6 0 0 0 642 569.5Z" fill="#2ea44f"/>
  <path d="M643.4 561 L642 569.5 A8.6 8.6 0 0 0 651.6 558.4Z" fill="#f7c52d"/>
  <circle cx="643.4" cy="560.6" r="3.9" fill="#f1f1f1"/><circle cx="643.4" cy="560.6" r="3.1" fill="#4b8bf5"/>
  <circle cx="648.6" cy="565.2" r="5" fill="#b89070"/>
  <path d="M643.8 564 Q645 560.4 648.8 560.2 Q652.8 560.4 653.5 564.6 Q651 562 648.6 562.6 Q646 562 643.8 564Z" fill="#5a3a2a"/>
  <ellipse cx="646" cy="565.2" rx="1.7" ry="2.3" fill="#d9ab90"/>
  <ellipse cx="650.4" cy="565" rx="2.2" ry="2.8" fill="#e2b79c"/>
  <path d="M644.6 568.6 Q648.6 567 652.6 568.4 Q650.8 570.2 648.6 570.2 Q646.2 570.2 644.6 568.6Z" fill="#efe9e4"/>
  <rect x="652.2" y="564.2" width="1.4" height="2.2" fill="#6fc3ea"/>
  <!-- zoom -->
  <rect x="671" y="552.3" width="17.2" height="16.9" rx="4.6" fill="#3f8cff"/>
  <rect x="674.4" y="557.8" width="7.4" height="6" rx="1.3" fill="#fff"/>
  <path d="M682.4 559.8 L685.2 557.9 V563.7 L682.4 561.8Z" fill="#fff"/>
  <!-- weather -->
  <circle cx="747.4" cy="558.4" r="3.4" fill="#f6b62e"/>
  <path d="M746 567 Q743.2 567 743.2 564.2 Q743.4 561.6 746 561.4 Q746.6 557.6 750.6 557.6 Q753.8 557.6 754.8 560.6 Q759 560.4 759 563.8 Q759 567 756.2 567Z" fill="#d6e9fa"/>
  <path d="M751.4 560.4 Q753.2 562.8 752.7 564 Q751.4 565.2 750.2 564 Q749.7 562.8 751.4 560.4Z" fill="#3b9ae8"/>
  <path d="M747.2 563.6 Q748.2 565 747.9 565.7 Q747.2 566.3 746.5 565.7 Q746.2 565 747.2 563.6Z" fill="#3b9ae8"/>
  <!-- tray chevron -->
  <path d="M801.3 563.4 L805.9 558.8 L810.5 563.4" fill="none" stroke="#fff" stroke-width="1.1"/>
  <!-- intel -->
  <rect x="818" y="555" width="12" height="11.8" rx="1" fill="#2b9be6"/>
  <path d="M818 564.8 Q822 566 826 565.4 L830 566.8 H819 Q818 566.8 818 565.8Z" fill="#f5b21b"/>
  <path d="M820.6 557.4 H827.8 V563.4 H823 M820.6 559.8 H825.6 M820.6 562 H822.4 M826 559.4 V562" stroke="#d9efff" stroke-width="0.8" fill="none"/>
  <!-- meet now -->
  <rect x="838.8" y="558" width="5.2" height="5.4" rx="0.8" fill="none" stroke="#fff" stroke-width="1"/>
  <path d="M844.6 560 L846.4 558.8 V562.6 L844.6 561.4Z" fill="#fff"/>
  <path d="M838 557 Q838 555.2 840 555.2 H843 Q845 555.2 845 557 M838 564.6 Q838 566.4 840 566.4 H843 Q845 566.4 845 564.6" fill="none" stroke="#fff" stroke-width="0.9"/>
  <!-- onedrive off -->
  <path d="M856.4 565.2 Q853.8 565.2 853.8 562.8 Q853.8 560.6 856 560.4 Q856.6 557.4 859.8 557.4 Q862 557.4 863 559.4 Q866.2 559.2 866.2 562.4 Q866.2 565.2 863.6 565.2Z" fill="#9a9a9a"/>
  <path d="M854.6 556.4 L865 566" stroke="#151515" stroke-width="2.2"/><path d="M854.6 556.4 L865 566" stroke="#bdbdbd" stroke-width="0.9"/>
  <!-- battery -->
  <rect x="874.6" y="558.2" width="8.6" height="5.6" fill="none" stroke="#fff" stroke-width="1"/>
  <rect x="883.4" y="559.8" width="1" height="2.4" fill="#fff"/>
  <rect x="875.8" y="559.4" width="6.2" height="3.2" fill="#fff"/>
  <path d="M873 556.4 V559 M875 556.4 V559 M872.2 559 H875.8 V561 Q875.8 562.4 874 562.4 Q872.2 562.4 872.2 561Z M874 562.4 V565" stroke="#fff" stroke-width="0.8" fill="#151515"/>
  <!-- wifi -->
  <g fill="none" stroke="#fff" stroke-width="0.9">
    <path d="M892 566 A9.4 9.4 0 0 1 901.2 556.8"/>
    <path d="M894.8 566 A6.6 6.6 0 0 1 901.2 559.6" stroke="#bbb"/>
    <path d="M897.4 566 A4 4 0 0 1 901.2 562.2" stroke="#bbb"/>
  </g>
  <rect x="899.6" y="564.4" width="1.8" height="1.8" fill="#fff"/>
  <!-- notifications -->
  <path d="M993.4 555.4 H1005.4 V564 H997.6 L994.8 566.4 V564 H993.4Z" fill="#fff"/>
  <path d="M995 557.6 H1003.8 M995 559.6 H1003.8 M995 561.6 H1003.8" stroke="#151515" stroke-width="0.7"/>
  <circle cx="1004.5" cy="566" r="4.9" fill="#151515" stroke="#bbb" stroke-width="0.9"/>
</svg>

<span id="t0" class="t" style="left:159.50px;top:138.15px;font-size:9.5px;font-weight:400;color:#fff;word-spacing:0.000px;transform:scaleX(1.0244);">cnsaf saf nacional</span>
<span id="t1" class="t" style="left:314.60px;top:103.87px;font-size:11px;font-weight:700;color:#fff;word-spacing:0.171px;transform:scaleX(1.0120);">ALEXANDRA BR...</span>
<span id="t2" class="t" style="left:308.20px;top:138.15px;font-size:9.5px;font-weight:400;color:#fff;word-spacing:0.000px;transform:scaleX(0.9524);">ALEXANDRA BRANDÃO RO...</span>
<span id="t3" class="t" style="left:497.00px;top:103.87px;font-size:11px;font-weight:700;color:#fff;word-spacing:0.000px;transform:scaleX(0.9909);">Sarah</span>
<span id="t4" class="t" style="left:456.50px;top:138.15px;font-size:9.5px;font-weight:400;color:#fff;word-spacing:0.000px;transform:scaleX(0.9898);">Sarah</span>
<span id="t5" class="t" style="left:610.40px;top:103.87px;font-size:11px;font-weight:700;color:#fff;word-spacing:1.580px;transform:scaleX(1.0120);">walkecia Brasilia...</span>
<span id="t6" class="t" style="left:605.10px;top:138.15px;font-size:9.5px;font-weight:400;color:#fff;word-spacing:0.000px;transform:scaleX(1.0019);">walkecia Brasiliano - SINO...</span>
<span id="t7" class="t" style="left:753.50px;top:138.15px;font-size:9.5px;font-weight:400;color:#fff;word-spacing:0.000px;transform:scaleX(1.0343);">Maria da Conceiçao</span>
<span id="t8" class="t" style="left:176.50px;top:189.07px;font-size:11px;font-weight:700;color:#fff;word-spacing:0.000px;transform:scaleX(1.0244);">Zuca Marinato</span>
<span id="t9" class="t" style="left:159.50px;top:223.35px;font-size:9.5px;font-weight:400;color:#fff;word-spacing:0.000px;transform:scaleX(1.0357);">Zuca Marinato</span>
<span id="t10" class="t" style="left:314.60px;top:189.07px;font-size:11px;font-weight:700;color:#fff;word-spacing:1.151px;transform:scaleX(1.0120);">Sandraly Casagr...</span>
<span id="t11" class="t" style="left:308.20px;top:223.35px;font-size:9.5px;font-weight:400;color:#fff;word-spacing:0.000px;transform:scaleX(1.0133);">Sandraly Casagrande Diniz</span>
<span id="t12" class="t" style="left:463.10px;top:189.07px;font-size:11px;font-weight:700;color:#fff;word-spacing:2.362px;transform:scaleX(1.0120);">Neusely de Men...</span>
<span id="t13" class="t" style="left:456.50px;top:223.35px;font-size:9.5px;font-weight:400;color:#fff;word-spacing:0.000px;transform:scaleX(1.0219);">Neusely de Menezes Mach...</span>
<span id="t14" class="t" style="left:612.60px;top:189.07px;font-size:11px;font-weight:700;color:#fff;word-spacing:1.197px;transform:scaleX(1.0120);">Romilda Julia A...</span>
<span id="t15" class="t" style="left:605.10px;top:223.35px;font-size:9.5px;font-weight:400;color:#fff;word-spacing:0.000px;transform:scaleX(1.0388);">Romilda Julia Aquino Maia</span>
<span id="t16" class="t" style="left:781.90px;top:189.07px;font-size:11px;font-weight:700;color:#fff;word-spacing:0.000px;transform:scaleX(1.0128);">Maria josé</span>
<span id="t17" class="t" style="left:753.50px;top:223.35px;font-size:9.5px;font-weight:400;color:#fff;word-spacing:0.000px;transform:scaleX(1.0587);">Maria josé</span>
<span id="t18" class="t" style="left:168.20px;top:274.67px;font-size:11px;font-weight:700;color:#fff;word-spacing:4.673px;transform:scaleX(1.0120);">Magaly Ribeiro...</span>
<span id="t19" class="t" style="left:159.50px;top:308.95px;font-size:9.5px;font-weight:400;color:#fff;word-spacing:0.000px;transform:scaleX(1.0407);">Magaly Ribeiro Sinodal Br...</span>
<span id="t20" class="t" style="left:308.20px;top:308.95px;font-size:9.5px;font-weight:400;color:#fff;word-spacing:0.000px;transform:scaleX(1.0308);">Luciene Emerick-Mato-gro...</span>
<span id="t21" class="t" style="left:464.20px;top:274.67px;font-size:11px;font-weight:700;color:#fff;word-spacing:1.249px;transform:scaleX(1.0120);">Sumaia Diniz Si...</span>
<span id="t22" class="t" style="left:456.50px;top:308.95px;font-size:9.5px;font-weight:400;color:#fff;word-spacing:0.000px;transform:scaleX(0.9963);">Sumaia Diniz Sinodal Paraí...</span>
<span id="t23" class="t" style="left:605.10px;top:308.95px;font-size:9.5px;font-weight:400;color:#fff;word-spacing:0.000px;transform:scaleX(0.9920);">Lucia Canto</span>
<span id="t24" class="t" style="left:796.70px;top:274.67px;font-size:11px;font-weight:700;color:#fff;word-spacing:0.000px;transform:scaleX(0.9849);">Rilza</span>
<span id="t25" class="t" style="left:753.50px;top:308.95px;font-size:9.5px;font-weight:400;color:#fff;word-spacing:0.000px;transform:scaleX(0.9657);">Rilza</span>
<span id="t26" class="t" style="left:203.40px;top:360.27px;font-size:11px;font-weight:700;color:#fff;word-spacing:0.000px;transform:scaleX(0.9856);">Cida</span>
<span id="t27" class="t" style="left:159.50px;top:394.55px;font-size:9.5px;font-weight:400;color:#fff;word-spacing:0.000px;transform:scaleX(1.0181);">Cida</span>
<span id="t28" class="t" style="left:308.20px;top:394.55px;font-size:9.5px;font-weight:400;color:#fff;word-spacing:0.000px;transform:scaleX(1.0604);">adiel ferreira</span>
<span id="t29" class="t" style="left:456.50px;top:394.55px;font-size:9.5px;font-weight:400;color:#fff;word-spacing:0.000px;transform:scaleX(1.0536);">Débora Machado / sinodal...</span>
<span id="t30" class="t" style="left:626.90px;top:360.27px;font-size:11px;font-weight:700;color:#fff;word-spacing:0.000px;transform:scaleX(0.9785);">Sônia Corrêa</span>
<span id="t31" class="t" style="left:605.10px;top:394.55px;font-size:9.5px;font-weight:400;color:#fff;word-spacing:0.000px;transform:scaleX(1.0217);">Sônia Corrêa</span>
<span id="t32" class="t" style="left:759.80px;top:360.27px;font-size:11px;font-weight:700;color:#fff;word-spacing:1.038px;transform:scaleX(1.0120);">Maria Cunha _ P...</span>
<span id="t33" class="t" style="left:739.70px;top:394.55px;font-size:9.5px;font-weight:400;color:#fff;word-spacing:0.000px;transform:scaleX(0.9910);">Maria Cunha _ Palmas-TO</span>
<span id="t34" class="t" style="left:166.80px;top:445.77px;font-size:11px;font-weight:700;color:#fff;word-spacing:1.868px;transform:scaleX(1.0120);">maria isabel ma...</span>
<span id="t35" class="t" style="left:159.50px;top:480.05px;font-size:9.5px;font-weight:400;color:#fff;word-spacing:0.000px;transform:scaleX(1.0432);">maria isabel machado  da ...</span>
<span id="t36" class="t" style="left:315.40px;top:445.77px;font-size:11px;font-weight:700;color:#fff;word-spacing:0.150px;transform:scaleX(1.0120);">Rev. Estevão Do...</span>
<span id="t37" class="t" style="left:308.20px;top:480.05px;font-size:9.5px;font-weight:400;color:#fff;word-spacing:0.000px;transform:scaleX(1.0099);">Rev. Estevão Domingos</span>
<span id="t38" class="t" style="left:465.50px;top:445.77px;font-size:11px;font-weight:700;color:#fff;word-spacing:0.229px;transform:scaleX(1.0120);">Edilma novais s...</span>
<span id="t39" class="t" style="left:456.50px;top:480.05px;font-size:9.5px;font-weight:400;color:#fff;word-spacing:0.000px;transform:scaleX(1.0373);">Edilma novais souza Chap...</span>
<span id="t40" class="t" style="left:612.60px;top:445.77px;font-size:11px;font-weight:700;color:#fff;word-spacing:0.722px;transform:scaleX(1.0120);">Janeide Caraíba...</span>
<span id="t41" class="t" style="left:605.10px;top:480.05px;font-size:9.5px;font-weight:400;color:#fff;word-spacing:0.000px;transform:scaleX(1.0030);">Janeide Caraíba Ferreira D...</span>
<span id="t42" class="t" style="left:753.50px;top:480.05px;font-size:9.5px;font-weight:400;color:#fff;word-spacing:0.000px;transform:scaleX(1.0154);">Izabel Maria da Penha Ferr...</span>
<span id="t43" class="t" style="left:16.90px;top:2.79px;font-size:10px;font-weight:400;color:#000;word-spacing:0.000px;transform:scaleX(0.9324);">Zoom Meeting</span>
<span id="t44" class="t" style="left:993.90px;top:27.05px;font-size:9.5px;font-weight:400;color:#e8e8e8;word-spacing:0.000px;transform:scaleX(0.9206);">View</span>
<span id="t45" class="t" style="left:13.80px;top:299.29px;font-size:10px;font-weight:400;color:#fff;word-spacing:0.000px;transform:scaleX(0.9143);">9/18</span>
<span id="t46" class="t" style="left:991.90px;top:299.29px;font-size:10px;font-weight:400;color:#999;word-spacing:0.000px;transform:scaleX(0.9400);">9/18</span>
<span id="t47" class="t" style="left:17.60px;top:530.05px;font-size:9.5px;font-weight:400;color:#b6b6b6;word-spacing:0.000px;transform:scaleX(0.9950);-webkit-text-stroke:0.3px #b6b6b6;">Unmute</span>
<span id="t48" class="t" style="left:81.40px;top:530.05px;font-size:9.5px;font-weight:400;color:#b6b6b6;word-spacing:0.000px;transform:scaleX(0.9738);-webkit-text-stroke:0.3px #b6b6b6;">Stop Video</span>
<span id="t49" class="t" style="left:365.10px;top:530.05px;font-size:9.5px;font-weight:400;color:#b6b6b6;word-spacing:0.000px;transform:scaleX(0.9448);-webkit-text-stroke:0.3px #b6b6b6;">Participants</span>
<span id="t50" class="t" style="left:400.00px;top:511.45px;font-size:9.5px;font-weight:400;color:#dcdcdc;word-spacing:0.000px;transform:scaleX(0.9836);">427</span>
<span id="t51" class="t" style="left:457.80px;top:530.05px;font-size:9.5px;font-weight:400;color:#b6b6b6;word-spacing:0.000px;transform:scaleX(0.9363);-webkit-text-stroke:0.3px #b6b6b6;">Chat</span>
<span id="t52" class="t" style="left:507.40px;top:530.05px;font-size:9.5px;font-weight:400;color:#23d05b;word-spacing:0.000px;transform:scaleX(0.8985);-webkit-text-stroke:0.35px #23d05b;">Share Screen</span>
<span id="t53" class="t" style="left:586.50px;top:530.05px;font-size:9.5px;font-weight:400;color:#b6b6b6;word-spacing:0.000px;transform:scaleX(0.9078);-webkit-text-stroke:0.3px #b6b6b6;">Record</span>
<span id="t54" class="t" style="left:641.00px;top:530.05px;font-size:9.5px;font-weight:400;color:#b6b6b6;word-spacing:0.000px;transform:scaleX(0.9160);-webkit-text-stroke:0.3px #b6b6b6;">Reactions</span>
<span id="t55" class="t" style="left:709.70px;top:530.05px;font-size:9.5px;font-weight:400;color:#b6b6b6;word-spacing:0.000px;transform:scaleX(0.9743);-webkit-text-stroke:0.3px #b6b6b6;">Apps</span>
<span id="t56" class="t" style="left:978.70px;top:520.05px;font-size:9.5px;font-weight:700;color:#fff;word-spacing:0.000px;transform:scaleX(0.9466);">Leave</span>
<span id="t57" class="t" style="left:473.20px;top:509.23px;font-size:8px;font-weight:700;color:#fff;word-spacing:0.000px;transform:scaleX(1.1228);">4</span>
<span id="t58" class="t" style="left:66.00px;top:554.99px;font-size:11.3px;font-weight:400;color:#3c3c3c;word-spacing:0.000px;transform:scaleX(1.0050);">Digite aqui para pesquisar</span>
<span id="t59" class="t" style="left:766.00px;top:555.67px;font-size:11px;font-weight:400;color:#fff;word-spacing:0.000px;transform:scaleX(0.8992);">29°C</span>
<span id="t60" class="t" style="left:909.10px;top:549.41px;font-size:9px;font-weight:400;color:#fff;word-spacing:0.000px;transform:scaleX(0.9223);">POR</span>
<span id="t61" class="t" style="left:908.40px;top:562.11px;font-size:9px;font-weight:400;color:#fff;word-spacing:0.000px;transform:scaleX(0.8794);">PTB2</span>
<span id="t62" class="t" style="left:947.60px;top:548.91px;font-size:9px;font-weight:400;color:#fff;word-spacing:0.000px;transform:scaleX(0.9287);">11:50</span>
<span id="t63" class="t" style="left:935.70px;top:562.31px;font-size:9px;font-weight:400;color:#fff;word-spacing:0.000px;transform:scaleX(0.9856);">25/03/2022</span>
<span id="t64" class="t" style="left:1002.80px;top:562.09px;font-size:7.5px;font-weight:700;color:#fff;word-spacing:0.000px;transform:scaleX(0.8150);">1</span>
<span id="t65" class="t" style="left:453.00px;top:556.83px;font-size:8px;font-weight:700;color:#fff;word-spacing:0.000px;transform:scaleX(1.0378);">N</span>
<span id="t66" class="t" style="left:492.60px;top:554.61px;font-size:11.5px;font-weight:700;color:#fff;word-spacing:0.000px;transform:scaleX(0.9646);">S</span>
</body></html>
